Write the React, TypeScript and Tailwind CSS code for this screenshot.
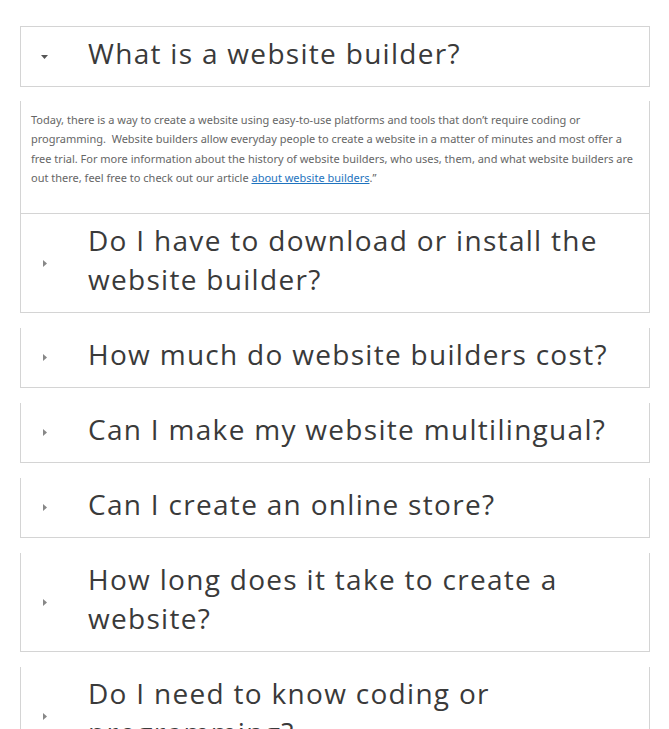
const faqs = [
  'What is a website builder?',
  'Do I have to download or install the website builder?',
  'How much do website builders cost?',
  'Can I make my website multilingual?',
  'Can I create an online store?',
  'How long does it take to create a website?',
  'Do I need to know coding or programming?',
]

function Caret({ open }: { open: boolean }) {
  return open ? (
    <svg width="7" height="4" viewBox="0 0 7 4" className="ml-[20px] block">
      <path d="M0 0H7L3.5 4Z" fill="#555" />
    </svg>
  ) : (
    <svg width="4" height="7" viewBox="0 0 4 7" className="ml-[22px] block">
      <path d="M0 0L4 3.5L0 7Z" fill="#888" />
    </svg>
  )
}

function Question({ text, open, first }: { text: string; open: boolean; first?: boolean }) {
  return (
    <div
      className={`flex items-center border-x border-b border-[#d4d4d4] ${first ? 'border-t' : ''}`}
    >
      <div className="flex w-[67px] shrink-0 items-center">
        <Caret open={open} />
      </div>
      <h3 className="pt-[7px] pb-[13px] pr-[40px] text-[28px] leading-[39px] tracking-[1.3px] text-[#3a3a3a] font-['Open_Sans',sans-serif]">
        {text}
      </h3>
    </div>
  )
}

export default function App() {
  return (
    <div className="min-h-screen bg-white px-[20px] pt-[26px]">
      <div className="w-[630px]">
        <Question text={faqs[0]} open first />

        {/* respuesta abierta */}
        <div className="mt-[14px] border-x border-b border-[#d4d4d4] px-[10px] pt-[9px] pb-[26px]">
          <p className="text-[11px] leading-[19.3px] text-[#666] font-['Noto_Sans',sans-serif]">
            Today, there is a way to create a website using easy-to-use platforms and tools that don’t require coding or
            programming.&nbsp; Website builders allow everyday people to create a website in a matter of minutes and most
            offer a free trial. For more information about the history of website builders, who uses, them, and what
            website builders are out there, feel free to check out our article{' '}
            <a href="#" className="text-[#1e73be] underline">
              about website builders
            </a>
            .”
          </p>
        </div>

        <Question text={faqs[1]} open={false} />

        {faqs.slice(2).map((q) => (
          <div key={q} className="mt-[15px]">
            <Question text={q} open={false} />
          </div>
        ))}
      </div>
    </div>
  )
}
